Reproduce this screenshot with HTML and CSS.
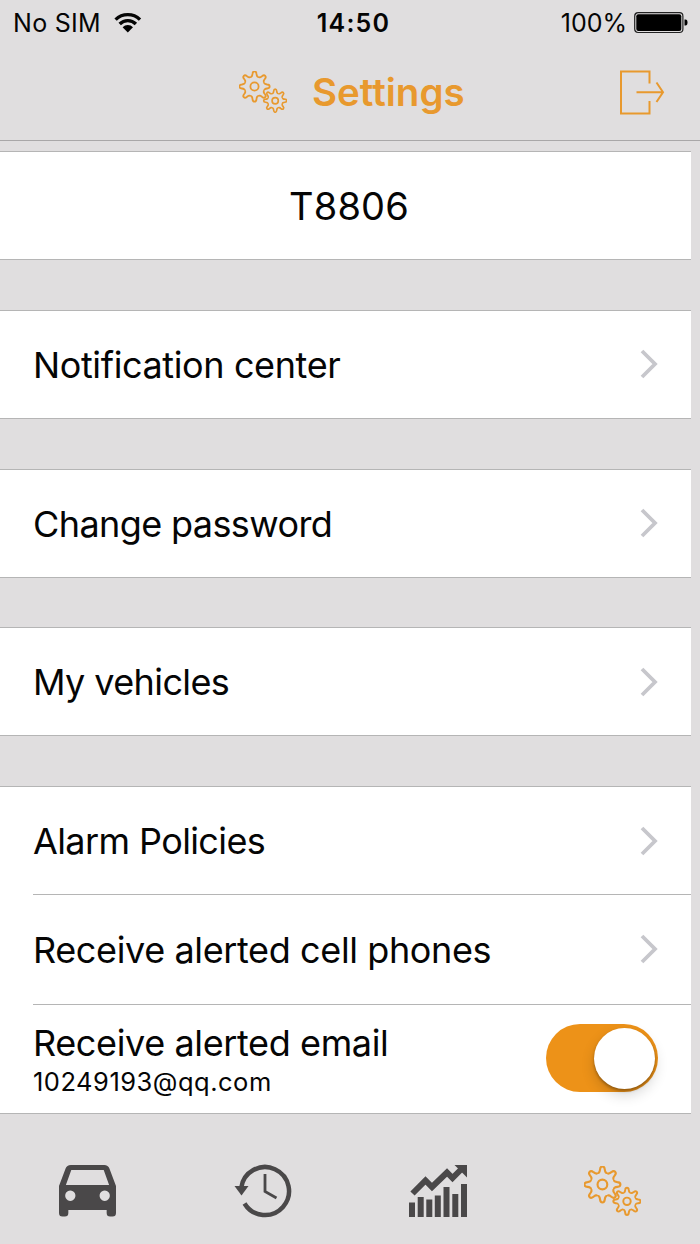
FILE: index.html
```html
<!DOCTYPE html>
<html lang="en">
<head>
  <meta charset="utf-8">
  <title>Settings</title>
  <link rel="stylesheet" href="styles.css">
</head>
<body>
  <!-- shared gear shapes -->
  <svg class="defs" width="0" height="0">
    <defs>
      <path id="tooth" d="M-4.1-9.9C-2.8-9.3-2.2-10.8-2-12.6C-1.7-16 1.7-16 2-12.6C2.2-10.8 2.8-9.3 4.1-9.9"/>
      <g id="gear">
        <use href="#tooth"/>
        <use href="#tooth" transform="rotate(45)"/>
        <use href="#tooth" transform="rotate(90)"/>
        <use href="#tooth" transform="rotate(135)"/>
        <use href="#tooth" transform="rotate(180)"/>
        <use href="#tooth" transform="rotate(225)"/>
        <use href="#tooth" transform="rotate(270)"/>
        <use href="#tooth" transform="rotate(315)"/>
        <circle r="4.1"/>
      </g>
      <symbol id="gears" viewBox="0 0 48 42">
        <use href="#gear" transform="translate(15.5 15.5)"/>
        <use class="small-gear" href="#gear" transform="translate(36.2 29.7) scale(.76)"/>
      </symbol>
    </defs>
  </svg>

  <div class="status-bar">
    <div class="carrier">
      <span class="carrier-name">No SIM</span>
      <svg class="wifi" width="28" height="20" viewBox="0 0 28 20">
        <path class="wifi-arc" d="M1.6 6.6a17.5 17.5 0 0 1 24.4 0"/>
        <path class="wifi-arc" d="M5.7 11a11.5 11.5 0 0 1 16.2 0"/>
        <path d="M8.6 14.3a7.3 7.3 0 0 1 10.4 0l-5.2 5.2z"/>
      </svg>
    </div>
    <div class="clock">14:50</div>
    <div class="power">
      <span class="percent">100%</span>
      <svg width="54" height="22" viewBox="0 0 54 22">
        <rect class="battery-case" x=".7" y=".7" width="48.2" height="19.8" rx="3.5"/>
        <rect x="2.3" y="2.3" width="45" height="16.6" rx="2"/>
        <path d="M50.5 7.5h1q2 0 2 3t-2 3h-1z"/>
      </svg>
    </div>
  </div>

  <div class="header">
    <svg class="gears header-gears"><use href="#gears"/></svg>
    <h1>Settings</h1>
    <svg class="logout" width="46" height="45" viewBox="0 0 46 45">
      <path d="M30.5 13.5V1.500H2V43.500H30.500V31M17.500 22.200H44M37.500 12.500L44 22.200L37.500 32"/>
    </svg>
  </div>

  <div class="list">
    <div class="group">
      <div class="row account">T8806</div>
    </div>
    <div class="group">
      <div class="row">
        <span class="label">Notification center</span>
        <svg class="chevron" viewBox="0 0 18 30"><path d="M2 2l13 13L2 28"/></svg>
      </div>
    </div>
    <div class="group">
      <div class="row">
        <span class="label tight">Change password</span>
        <svg class="chevron" viewBox="0 0 18 30"><path d="M2 2l13 13L2 28"/></svg>
      </div>
    </div>
    <div class="group">
      <div class="row">
        <span class="label tight">My vehicles</span>
        <svg class="chevron" viewBox="0 0 18 30"><path d="M2 2l13 13L2 28"/></svg>
      </div>
    </div>
    <div class="group">
      <div class="row">
        <span class="label tight">Alarm Policies</span>
        <svg class="chevron" viewBox="0 0 18 30"><path d="M2 2l13 13L2 28"/></svg>
      </div>
      <div class="row">
        <span class="label">Receive alerted cell phones</span>
        <svg class="chevron" viewBox="0 0 18 30"><path d="M2 2l13 13L2 28"/></svg>
      </div>
      <div class="row">
        <div class="email">
          <span class="label">Receive alerted email</span>
          <span class="address">10249193@qq.com</span>
        </div>
        <div class="switch"><div class="knob"></div></div>
      </div>
    </div>
  </div>

  <div class="tab-bar">
    <div class="tab">
      <svg width="57" height="52" viewBox="0 0 58 52" preserveAspectRatio="none">
        <path fill-rule="evenodd" d="M12 0H46Q50 0 51.300 3.500L58 21V48Q58 51.500 54.500 51.500H52Q48.500 51.500 48.500 48V45H9.500V48Q9.500 51.500 6 51.500H3.500Q0 51.500 0 48V21L6.700 3.500Q8 0 12 0ZM12.500 5L7 20H51L45.500 5ZM11.500 25.500a5.200 5.200 0 1 0 .01 0ZM46.500 25.500a5.200 5.200 0 1 0 .01 0Z"/>
      </svg>
    </div>
    <div class="tab">
      <svg width="58" height="54" viewBox="0 0 58 54">
        <path class="clock-ring" d="M7.200 24A24 24 0 1 1 10.500 39.500"/>
        <path d="M.5 22H14.500L7.500 31.500Z"/>
        <path class="clock-hand" d="M31 10V27.500L42.500 34"/>
      </svg>
    </div>
    <div class="tab">
      <svg width="58" height="54" viewBox="0 0 58 54">
        <path d="M0 38.500h6V53H0zM8.700 33h6v20h-6zM17.300 35.500h6V53h-6zM25.800 31.500h6V53h-6zM34.500 23h6v30h-6zM43.300 30h6v23h-6zM52 20h6v33h-6z"/>
        <path class="trend" d="M3.500 29.500L16.500 16.500L23 23L38 8.500L43.500 14L53 4.500"/>
        <path d="M45.500 1H58V13.500Z"/>
      </svg>
    </div>
    <div class="tab">
      <svg class="gears tab-gears"><use href="#gears"/></svg>
    </div>
  </div>
</body>
</html>
```
FILE: styles.css
```css
body {
  margin: 0;
  height: 1244px;
  display: flex;
  flex-direction: column;
  background-color: #e0dedf;
  color: #050505;
  font-family: Inter, "Liberation Sans", sans-serif;
  overflow: hidden;
}

.defs {
  position: absolute;
}

svg {
  display: block;
  flex: none;
  overflow: visible;
}

/* status bar */
.status-bar {
  display: flex;
  justify-content: space-between;
  height: 44px;
  padding: 1px 12px 0 13px;
  font-size: 25px;
  line-height: 44px;
}

.carrier,
.power {
  flex: 1;
  display: flex;
  align-items: center;
}

.carrier {
  gap: 13px;
}

.carrier-name {
  letter-spacing: 0.3px;
}

.wifi-arc {
  fill: none;
  stroke: #050505;
  stroke-width: 3.4;
}

.clock {
  padding-left: 6px;
  font-weight: 600;
  letter-spacing: 1.2px;
}

.power {
  justify-content: flex-end;
  gap: 7px;
}

.battery-case {
  fill: none;
  stroke: #222;
  stroke-width: 1.2;
}

/* header */
.header {
  display: flex;
  align-items: center;
  box-sizing: border-box;
  height: 96px;
  padding: 0 35px 1px 239px;
  border-bottom: 1px solid #a9a7a8;
}

.gears {
  fill: none;
  stroke: #e8992e;
  stroke-width: 1.8;
  stroke-linejoin: round;
}

.small-gear {
  stroke-width: 2.2;
}

.header-gears {
  width: 48px;
  height: 42px;
}

h1 {
  margin: 0 auto 0 25px;
  color: #e8992e;
  font-size: 38.5px;
  font-weight: 600;
}

.logout {
  fill: none;
  stroke: #e8992e;
  stroke-width: 2;
}

/* settings list */
.list {
  display: flex;
  flex-direction: column;
  gap: 49.75px;
  padding: 10px 9px 0 0;
}

.group {
  box-sizing: border-box;
  background-color: #fff;
  border-top: 1px solid #b5b5b5;
  border-bottom: 1px solid #b5b5b5;
}

.row {
  display: flex;
  align-items: center;
  justify-content: space-between;
  box-sizing: border-box;
  height: 107px;
  padding-right: 33px;
  margin-left: 33px;
}

.row + .row {
  height: 109.5px;
  border-top: 1px solid #b5b5b5;
}

.account {
  justify-content: center;
  margin-left: 40px;
  font-size: 38px;
  letter-spacing: 0.2px;
}

.label {
  padding-top: 1px;
  font-size: 36px;
  line-height: 44px;
  letter-spacing: -0.38px;
  white-space: nowrap;
}

.tight {
  letter-spacing: -0.6px;
}

.chevron {
  width: 18px;
  height: 30px;
  fill: none;
  stroke: #c7c7cc;
  stroke-width: 3.8;
}

.email {
  display: flex;
  flex-direction: column;
  padding-top: 1px;
}

.address {
  font-size: 25.5px;
  line-height: 34px;
  letter-spacing: 0.5px;
}

.switch {
  display: flex;
  align-items: center;
  justify-content: flex-end;
  box-sizing: border-box;
  width: 112px;
  height: 68px;
  margin-bottom: 1px;
  padding-right: 3px;
  border-radius: 34px;
  background-color: #ed9218;
}

.knob {
  width: 61px;
  height: 61px;
  border-radius: 50%;
  background-color: #fff;
  box-shadow: 0 2px 3px rgba(0, 0, 0, 0.3), 0 6px 14px rgba(0, 0, 0, 0.16);
}

/* bottom tabs */
.tab-bar {
  display: flex;
  flex: 1;
  align-items: center;
  padding-top: 24px;
}

.tab {
  flex: 1;
  display: flex;
  justify-content: center;
  fill: #4a4849;
}

.clock-ring,
.clock-hand,
.trend {
  fill: none;
  stroke: #4a4849;
  stroke-width: 4.5;
}

.clock-hand {
  stroke-width: 2.8;
}

.trend {
  stroke-width: 6;
}

.tab-gears {
  width: 57px;
  height: 50px;
}
```
